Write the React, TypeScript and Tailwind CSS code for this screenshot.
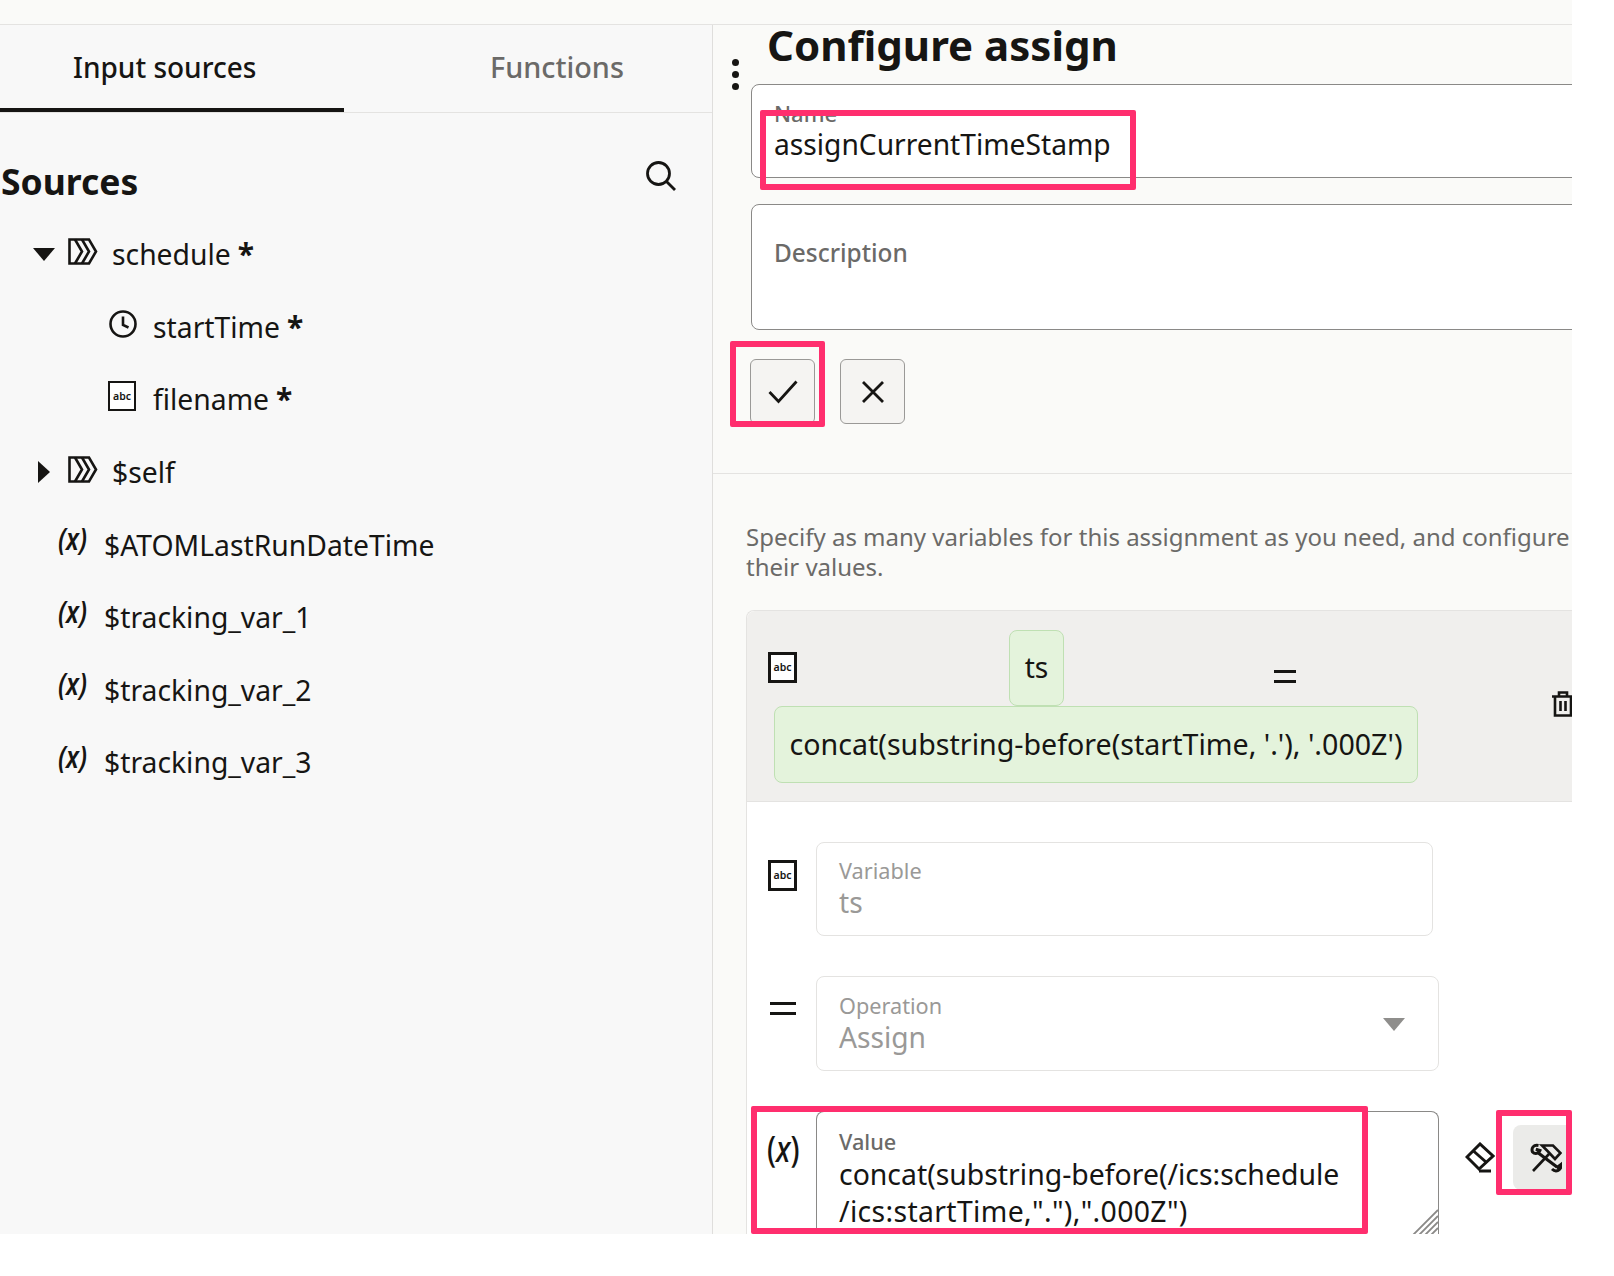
import { FC, ReactNode } from "react";

const AbcIcon: FC<{ size?: number; stroke?: number }> = ({ size = 28, stroke = 2.5 }) => (
  <div
    style={{ width: size, height: size + 2, borderWidth: stroke }}
    className="flex items-center justify-center border-[#161513] bg-white text-[10.5px] font-semibold leading-none text-[#161513] shrink-0"
  >
    abc
  </div>
);

const StructIcon = () => (
  <svg width="30" height="27" viewBox="0 0 30 27" fill="none" stroke="#161513" strokeWidth="2.6">
    <path d="M1.5 1.5H21L28 13.5L21 25.5H1.5Z" />
    <path d="M7 1.5L14 13.5L7 25.5" />
    <path d="M14 1.5L21 13.5L14 25.5" />
  </svg>
);

const ClockIcon = () => (
  <svg width="30" height="30" viewBox="0 0 30 30" fill="none" stroke="#161513" strokeWidth="2.6">
    <circle cx="15" cy="15" r="12.5" />
    <path d="M15 7.5V16L20.5 18.5" />
  </svg>
);

const CaretDown: FC<{ color?: string; w?: number; h?: number }> = ({ color = "#161513", w = 22, h = 13 }) => (
  <svg width={w} height={h} viewBox="0 0 22 13">
    <path d="M0 0H22L11 13Z" fill={color} />
  </svg>
);

const CaretRight = () => (
  <svg width="12" height="22" viewBox="0 0 12 22">
    <path d="M0 0L12 11L0 22Z" fill="#161513" />
  </svg>
);

const VarIcon = () => (
  <span className="inline-block scale-y-[1.25] -translate-y-[3px] font-semibold italic text-[25px] leading-none text-[#161513]">(x)</span>
);

const SearchIcon = () => (
  <svg width="32" height="32" viewBox="0 0 32 32" fill="none" stroke="#161513" strokeWidth="2.8">
    <circle cx="13.5" cy="13.5" r="11" />
    <path d="M21.5 21.5L30 30" />
  </svg>
);

const CheckIcon = () => (
  <svg width="30" height="24" viewBox="0 0 30 24" fill="none" stroke="#161513" strokeWidth="2.8">
    <path d="M1.5 12L10.5 21.5L28.5 1.5" />
  </svg>
);

const CloseIcon = () => (
  <svg width="24" height="24" viewBox="0 0 24 24" fill="none" stroke="#161513" strokeWidth="2.8">
    <path d="M2 2L22 22M22 2L2 22" />
  </svg>
);

const EqualsIcon: FC<{ w?: number }> = ({ w = 22 }) => (
  <svg width={w} height="14" viewBox="0 0 22 14" fill="#161513" preserveAspectRatio="none">
    <rect width="22" height="3" />
    <rect y="10" width="22" height="3" />
  </svg>
);

const TrashIcon = () => (
  <svg width="24" height="26" viewBox="0 0 24 26" fill="none" stroke="#161513" strokeWidth="2.6">
    <path d="M1 5.5H23M8 5.5V1.5H16V5.5M4 5.5V24.5H20V5.5M9.5 10V20M14.5 10V20" />
  </svg>
);

const EraserIcon = () => (
  <svg width="30" height="32" viewBox="0 0 30 32" fill="none" stroke="#161513" strokeWidth="3">
    <path d="M2 15L15 2L28 14L14 27Z" />
    <path d="M8.5 9L21.5 20.5" />
    <path d="M14 29H26" />
  </svg>
);

const ToolsIcon = () => (
  <svg width="32" height="30" viewBox="0 0 32 30" fill="none" stroke="#161513">
    <path d="M3 28L19 11" strokeWidth="2.6" />
    <path d="M12 2.5H23L30.5 10L25 16L17.5 8Z" strokeWidth="2.6" />
    <path d="M7 9L27 24" strokeWidth="3.2" />
    <path d="M8.5 2.5C3.5 1.5 1 5 2.5 9C5 11.5 9 10.5 10 7.5L5.8 6.2" strokeWidth="3" />
    <path d="M22 26C26 30 31.5 27 31 21.5L26.5 25" strokeWidth="3" />
  </svg>
);

const SourceRow: FC<{ indent: number; icon: ReactNode; iconWidth: number; label: string; required?: boolean; caret?: ReactNode }> = ({
  indent,
  icon,
  iconWidth,
  label,
  required,
  caret,
}) => (
  <div style={{ paddingLeft: indent }} className="flex items-center h-[72.6px] text-[#161513]">
    {caret && <div className="w-[35px] flex justify-center mr-[7px]">{caret}</div>}
    <div style={{ width: iconWidth }} className="flex -translate-y-[3px] shrink-0">
      {icon}
    </div>
    <span className="text-[28.3px] leading-none">{label}</span>
    {required && <span className="ml-[7px] text-[30px] font-bold leading-none">*</span>}
  </div>
);

const PinkBox: FC<{ className: string }> = ({ className }) => (
  <div className={`absolute border-[6px] border-[#ff2e6e] rounded-[2px] pointer-events-none ${className}`} />
);

export default function App() {
  return (
    <div className="relative w-[1614px] h-[1276px] bg-white overflow-hidden font-['Noto_Sans','Open_Sans',sans-serif]">
      <div className="w-[1572px] h-[1234px] overflow-hidden flex flex-col">
        <div className="h-[25px] shrink-0 bg-[#fafaf8] border-b border-[#e4e3e1]" />
        <div className="flex flex-1 min-h-0">
          {/* left side */}
          <aside className="w-[712px] shrink-0 bg-[#f8f8f8]">
            <div className="flex h-[88px] border-b border-[#e4e3e1]">
              <div className="w-[344px] h-[87px] border-b-[4px] border-[#161513] pl-[73px] pt-[22px] text-[28px] font-medium leading-[40px] text-[#161513]">
                Input sources
              </div>
              <div className="pl-[146px] pt-[22px] text-[28.8px] font-medium leading-[40px] text-[#6b6a68]">Functions</div>
            </div>
            <div className="flex items-center justify-between pt-[43px] pl-[1px] pr-[35px]">
              <h2 className="text-[35.5px] font-bold leading-[50px] text-[#161513]">Sources</h2>
              <div className="-translate-y-[5px]">
                <SearchIcon />
              </div>
            </div>
            <div className="mt-[12px]">
              <SourceRow indent={26} caret={<CaretDown />} icon={<StructIcon />} iconWidth={44} label="schedule" required />
              <SourceRow indent={108} icon={<ClockIcon />} iconWidth={45} label="startTime" required />
              <SourceRow indent={108} icon={<AbcIcon />} iconWidth={45} label="filename" required />
              <SourceRow indent={26} caret={<CaretRight />} icon={<StructIcon />} iconWidth={44} label="$self" />
              <SourceRow indent={58} icon={<VarIcon />} iconWidth={46} label="$ATOMLastRunDateTime" />
              <SourceRow indent={58} icon={<VarIcon />} iconWidth={46} label="$tracking_var_1" />
              <SourceRow indent={58} icon={<VarIcon />} iconWidth={46} label="$tracking_var_2" />
              <SourceRow indent={58} icon={<VarIcon />} iconWidth={46} label="$tracking_var_3" />
            </div>
          </aside>

          {/* right side */}
          <section className="flex-1 min-w-0 bg-[#fafaf8] border-l border-[#dfdedc]">
            <div className="flex h-[449px] w-[859px] overflow-x-clip border-b border-[#e4e3e1]">
              <div className="w-[38px] shrink-0 flex flex-col items-center pl-[7px] pt-[34px] gap-[5px]">
                <span className="w-[7px] h-[7px] rounded-full bg-[#161513]" />
                <span className="w-[7px] h-[7px] rounded-full bg-[#161513]" />
                <span className="w-[7px] h-[7px] rounded-full bg-[#161513]" />
              </div>
              <div className="w-[900px] shrink-0">
                <h1 className="ml-[16px] h-[59px] text-[42px] font-bold leading-[40px] whitespace-nowrap text-[#161513]">Configure assign</h1>
                <div className="h-[94px] rounded-l-[8px] border border-[#8a8987] bg-white pl-[22px] pt-[15px]">
                  <div className="text-[22px] font-medium leading-[26px] text-[#6b6a68]">Name</div>
                  <div className="text-[28.2px] leading-[36px] text-[#161513]">assignCurrentTimeStamp</div>
                </div>
                <div className="mt-[26px] h-[126px] rounded-l-[8px] border border-[#8a8987] bg-white pl-[22px] pt-[33px]">
                  <div className="text-[24.4px] font-medium leading-[30px] text-[#6b6a68]">Description</div>
                </div>
                <div className="-ml-[1px] mt-[29px] flex gap-[25px]">
                  <button className="flex items-center justify-center w-[65px] h-[65px] rounded-[6px] border border-[#9a9997] bg-[#f5f4f2]">
                    <CheckIcon />
                  </button>
                  <button className="flex items-center justify-center w-[65px] h-[65px] rounded-[6px] border border-[#9a9997] bg-[#f5f4f2]">
                    <CloseIcon />
                  </button>
                </div>
              </div>
            </div>

            <div className="w-[900px] pl-[33px] pt-[48px]">
              <p className="w-[840px] text-[24px] leading-[30px] text-[#6b6a68]">
                Specify as many variables for this assignment as you need, and configure their values.
              </p>
              <div className="mt-[28px] rounded-tl-[8px] border-l border-t border-[#e4e3e1] bg-white">
                <div className="h-[191px] bg-[#f0efed] border-b border-[#e4e3e1] rounded-tl-[8px] pl-[21px] pt-[19px]">
                  <div className="flex h-[76px]">
                    <div className="pt-[22px] w-[241px]">
                      <AbcIcon size={29} stroke={3} />
                    </div>
                    <div className="flex w-[55px] h-[76px] shrink-0 items-center justify-center rounded-[8px] border border-[#bfe0b3] bg-[#e4f3dc] text-[28.2px] leading-none text-[#161513]">
                      <span className="-translate-y-[1px]">ts</span>
                    </div>
                    <div className="ml-[210px] pt-[40px]">
                      <EqualsIcon />
                    </div>
                  </div>
                  <div className="flex">
                    <div className="ml-[6px] flex w-[644px] h-[77px] shrink-0 items-center justify-center rounded-[8px] border border-[#bfe0b3] bg-[#e4f3dc] text-[28.6px] leading-none whitespace-nowrap text-[#161513]">
                      concat(substring-before(startTime, '.'), '.000Z')
                    </div>
                    <div className="ml-[133px] -mt-[15px]">
                      <TrashIcon />
                    </div>
                  </div>
                </div>

                <div className="pl-[21px] pt-[40px]">
                  <div className="flex">
                    <div className="w-[48px] pt-[18px]">
                      <AbcIcon size={29} stroke={3} />
                    </div>
                    <div className="w-[617px] h-[94px] rounded-[8px] border border-[#e4e3e1] pl-[22px] pt-[14px]">
                      <div className="text-[21.7px] leading-[28px] text-[#9a9997]">Variable</div>
                      <div className="text-[28.2px] leading-[34px] text-[#9a9997]">ts</div>
                    </div>
                  </div>

                  <div className="flex mt-[40px]">
                    <div className="w-[48px] pl-[2px] pt-[26px]">
                      <EqualsIcon w={26} />
                    </div>
                    <div className="flex justify-between w-[623px] h-[95px] rounded-[8px] border border-[#e4e3e1] pl-[22px] pr-[33px] pt-[15px]">
                      <div>
                        <div className="text-[21.7px] leading-[28px] text-[#9a9997]">Operation</div>
                        <div className="text-[28.2px] leading-[35px] text-[#9a9997]">Assign</div>
                      </div>
                      <div className="pt-[26px]">
                        <CaretDown color="#8f8e8c" />
                      </div>
                    </div>
                  </div>

                  <div className="flex mt-[40px]">
                    <div className="w-[48px] pt-[22px]">
                      <span className="inline-block -ml-[1px] scale-y-[1.25] text-[29px] font-medium leading-none text-[#161513]">
                        (<i>x</i>)
                      </span>
                    </div>
                    <div className="relative w-[623px] h-[124px] rounded-t-[8px] border border-b-0 border-[#8a8987] pl-[22px] pt-[15px]">
                      <div className="text-[21.7px] font-medium leading-[29px] text-[#6b6a68]">Value</div>
                      <div className="text-[28.4px] leading-[37px] text-[#161513]">
                        concat(substring-before(/ics:schedule
                        <br />
                        <span className="tracking-[0.35px]">/ics:startTime,"."),".000Z")</span>
                      </div>
                      <svg className="absolute right-0 bottom-0" width="26" height="26" viewBox="0 0 26 26" stroke="#8a8987" strokeWidth="1.8">
                        <path d="M1 26L26 1M7 26L26 7M13 26L26 13M19 26L26 19" />
                      </svg>
                    </div>
                    <div className="ml-[26px] pt-[31px]">
                      <EraserIcon />
                    </div>
                    <div className="ml-[18px] mt-[14px] flex w-[70px] h-[65px] rounded-[8px] bg-[#ebebe9] pl-[17px] pt-[18px]">
                      <ToolsIcon />
                    </div>
                  </div>
                </div>
              </div>
            </div>
          </section>
        </div>
      </div>

      <PinkBox className="left-[760px] top-[110px] w-[376px] h-[80px]" />
      <PinkBox className="left-[730px] top-[341px] w-[95px] h-[86px]" />
      <PinkBox className="left-[751px] top-[1106px] w-[617px] h-[128px]" />
      <PinkBox className="left-[1496px] top-[1110px] w-[76px] h-[85px]" />
    </div>
  );
}
